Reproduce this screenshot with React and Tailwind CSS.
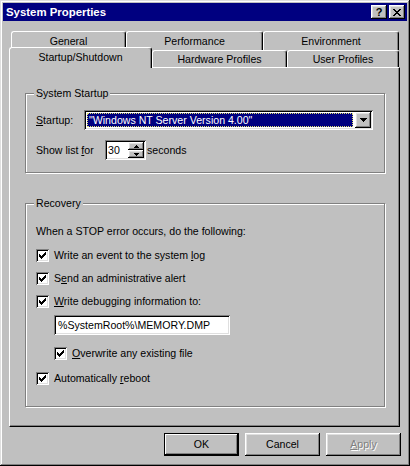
import React from "react"

const RAISED =
  "shadow-[inset_-1px_-1px_0_#000,inset_1px_1px_0_#fff,inset_-2px_-2px_0_#808080,inset_2px_2px_0_#dfdfdf]"
const SUNKEN =
  "shadow-[inset_1px_1px_0_#808080,inset_-1px_-1px_0_#fff,inset_2px_2px_0_#000,inset_-2px_-2px_0_#dfdfdf]"

// pixel glyphs, drawn cell by cell
const CHECK = ["......#", ".....##", "#...###", "##.###.", "#####..", ".###...", "..#...."]
const CLOSE = ["##....##", ".##..##.", "..####..", "...##...", "..####..", ".##..##.", "##....##"]
const DOWN = ["#######", ".#####.", "..###..", "...#..."]
const SPIN_UP = ["..#..", ".###.", "#####"]
const SPIN_DOWN = ["#####", ".###.", "..#.."]

function Pixels({ rows, color = "#000" }) {
  const w = rows[0].length
  const h = rows.length
  return (
    <svg width={w} height={h} viewBox={`0 0 ${w} ${h}`} shapeRendering="crispEdges" className="block">
      {rows.map((row, y) =>
        row.split("").map((c, x) => (c === "#" ? <rect key={`${x}-${y}`} x={x} y={y} width="1" height="1" fill={color} /> : null))
      )}
    </svg>
  )
}

function Tab({ label, width, selected, top }) {
  return (
    <div
      className={`${width} ${selected ? "h-[21px] -mb-px relative z-10 pt-[3px]" : "h-full " + top} bg-[#c0c0c0] border-t border-l border-r border-t-white border-l-white border-r-black rounded-t-[3px] shadow-[inset_-1px_0_0_#808080] text-center leading-[13px]`}
    >
      {label}
    </div>
  )
}

function Check({ children, className = "" }) {
  return (
    <div className={`flex items-center h-[13px] ${className}`}>
      <div className={`w-[13px] h-[13px] bg-white ${SUNKEN} flex items-center justify-center shrink-0`}>
        <Pixels rows={CHECK} />
      </div>
      <span className="ml-[5px] leading-[13px]">{children}</span>
    </div>
  )
}

function Group({ label, className, children }) {
  return (
    <div className={`relative border border-[#808080] shadow-[1px_1px_0_#fff,inset_1px_1px_0_#fff] ${className}`}>
      <span className="absolute -top-[7px] left-[8px] px-[2px] bg-[#c0c0c0] leading-[13px]">{label}</span>
      {children}
    </div>
  )
}

function Button({ children, isDefault, disabled }) {
  return (
    <div
      className={`w-[75px] h-[23px] flex items-center justify-center bg-[#c0c0c0] ${
        isDefault
          ? "border border-black shadow-[inset_-1px_-1px_0_#000,inset_1px_1px_0_#fff,inset_-2px_-2px_0_#808080]"
          : RAISED
      } ${disabled ? "text-[#808080] [text-shadow:1px_1px_0_#fff]" : ""}`}
    >
      {children}
    </div>
  )
}

export default function App() {
  return (
    <div className="w-[410px] h-[466px] bg-[#c0c0c0] p-[3px] flex flex-col text-black text-[10.6px] font-['Liberation_Sans',Arial,sans-serif] shadow-[inset_-1px_-1px_0_#000,inset_1px_1px_0_#dfdfdf,inset_-2px_-2px_0_#808080,inset_2px_2px_0_#fff]">
      {/* Title bar */}
      <div className="h-[18px] bg-[#000080] flex items-center justify-between pl-[3px] pr-[2px]">
        <span className="text-white font-bold text-[11.4px] leading-[14px]">System Properties</span>
        <div className="flex gap-[2px]">
          <div className={`w-[16px] h-[14px] ${RAISED} bg-[#c0c0c0] flex items-center justify-center font-bold text-[11px] leading-[14px] pb-px`}>
            ?
          </div>
          <div className={`w-[16px] h-[14px] ${RAISED} bg-[#c0c0c0] flex items-center justify-center pr-px`}>
            <Pixels rows={CLOSE} />
          </div>
        </div>
      </div>

      {/* Tabs */}
      <div className="mt-[10px] ml-[6px] w-[391px]">
        <div className="flex pl-[2px] h-[19px]">
          <Tab label="General" width="w-[115px]" top="pt-[3px]" />
          <Tab label="Performance" width="w-[137px]" top="pt-[3px]" />
          <Tab label="Environment" width="w-[136px]" top="pt-[3px]" />
        </div>
        <div className="flex items-end h-[17px]">
          <Tab label="Startup/Shutdown" width="w-[143px]" selected />
          <Tab label="Hardware Profiles" width="w-[135px]" top="pt-[2px]" />
          <Tab label="User Profiles" width="w-[112px]" top="pt-[2px]" />
        </div>

        {/* Panel */}
        <div className="h-[360px] border-t border-l border-white border-r border-b border-r-black border-b-black shadow-[inset_-1px_-1px_0_#808080] pl-[15px] pt-[25px]">
          <Group label="System Startup" className="w-[360px] h-[80px] pl-[10px] pt-[16px]">
            <div className="flex items-center h-[20px]">
              <span className="w-[48px] leading-[13px]">
                <u>S</u>tartup:
              </span>
              <div className={`w-[289px] h-[20px] bg-white ${SUNKEN} flex items-center pl-[3px] pr-[2px]`}>
                <div className="flex-1 h-[14px] bg-[#000080] border border-dotted border-[#e0e070] text-white leading-[12px] pl-px">
                  "Windows NT Server Version 4.00"
                </div>
                <div className={`w-[16px] h-[16px] ml-[2px] bg-[#c0c0c0] ${RAISED} flex items-center justify-center`}>
                  <Pixels rows={DOWN} />
                </div>
              </div>
            </div>
            <div className="flex items-center h-[20px] mt-[10px]">
              <span className="w-[69px] leading-[13px]">
                Show list <u>f</u>or
              </span>
              <div className={`w-[41px] h-[20px] bg-white ${SUNKEN} flex items-center pl-[3px] pr-[2px]`}>
                <span className="flex-1 leading-[13px]">30</span>
                <div className="flex flex-col">
                  <div className={`w-[16px] h-[8px] bg-[#c0c0c0] ${RAISED} flex items-center justify-center`}>
                    <Pixels rows={SPIN_UP} />
                  </div>
                  <div className={`w-[16px] h-[8px] bg-[#c0c0c0] ${RAISED} flex items-center justify-center`}>
                    <Pixels rows={SPIN_DOWN} />
                  </div>
                </div>
              </div>
              <span className="ml-[1px] leading-[13px]">seconds</span>
            </div>
          </Group>

          <Group label="Recovery" className="w-[360px] h-[204px] mt-[30px] pl-[10px] pt-[21px]">
            <div className="leading-[13px]">When a STOP error occurs, do the following:</div>
            <Check className="mt-[11px]">
              Write an event to the system <u>l</u>og
            </Check>
            <Check className="mt-[10px]">
              S<u>e</u>nd an administrative alert
            </Check>
            <Check className="mt-[10px]">
              <u>W</u>rite debugging information to:
            </Check>
            <div className={`ml-[18px] mt-[7px] w-[176px] h-[20px] bg-white ${SUNKEN} flex items-center pl-[4px] leading-[13px]`}>
              %SystemRoot%\MEMORY.DMP
            </div>
            <Check className="ml-[18px] mt-[12px]">
              <u>O</u>verwrite any existing file
            </Check>
            <Check className="mt-[12px]">
              Automatically <u>r</u>eboot
            </Check>
          </Group>
        </div>
      </div>

      {/* Buttons */}
      <div className="flex justify-end gap-[6px] mt-[6px] mr-[6px]">
        <Button isDefault>OK</Button>
        <Button>Cancel</Button>
        <Button disabled>
          <span>
            <u>A</u>pply
          </span>
        </Button>
      </div>
    </div>
  )
}
